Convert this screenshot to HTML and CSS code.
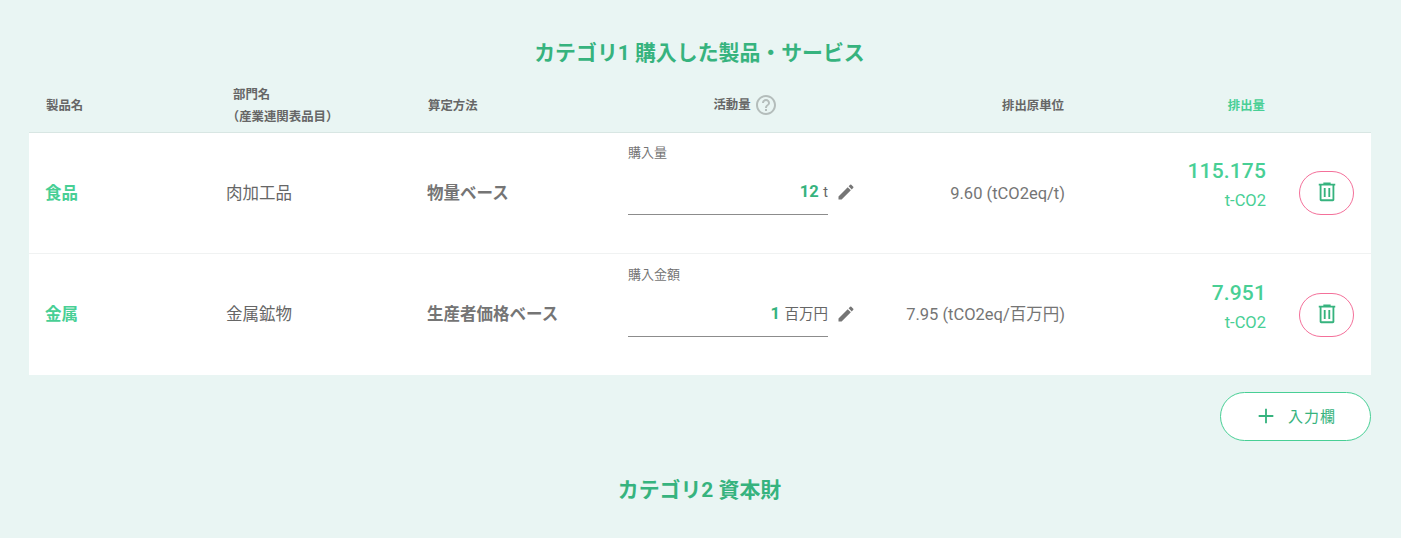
FILE: index.html
```html
<!DOCTYPE html>
<html lang="ja">
  <head>
    <meta charset="utf-8">
    <title>排出量</title>
    <link rel="stylesheet" href="styles.css">
  </head>
  <body>
    <svg class="sprite">
      <symbol id="trash" viewBox="0 0 24 24">
        <path d="M20 3h-4V1.5H8V3H3v2h1v15.5c0 1 .8 1.5 1.7 1.5h12.6c1 0 1.7-.6 1.7-1.5V5h1V3zM18 20H6V5h12v15zM8.5 7.5h2v10h-2zM13.5 7.5h2v10h-2z"/>
      </symbol>
      <symbol id="pencil" viewBox="0 0 24 24">
        <path d="M3 17.25V21h3.75L17.81 9.94l-3.75-3.75L3 17.25zM20.71 7.04a1 1 0 0 0 0-1.41l-2.34-2.34a1 1 0 0 0-1.41 0l-1.83 1.83 3.75 3.75 1.83-1.83z"/>
      </symbol>
    </svg>
    <div id="main">
      <h2>カテゴリ1 購入した製品・サービス</h2>
      <table class="items">
        <colgroup>
          <col class="col-name">
          <col class="col-sector">
          <col class="col-method">
          <col class="col-activity">
          <col class="col-unit">
          <col class="col-emission">
          <col class="col-action">
        </colgroup>
        <thead>
          <tr>
            <th>製品名</th>
            <th class="sector-head">部門名<br><span class="paren">（産業連関表品目）</span></th>
            <th>算定方法</th>
            <th>
              <div class="activity-head">
                活動量
                <svg class="help" viewBox="0 0 24 24"><path d="M11 18h2v-2h-2v2zm1-16C6.48 2 2 6.48 2 12s4.48 10 10 10 10-4.48 10-10S17.52 2 12 2zm0 18c-4.41 0-8-3.59-8-8s3.59-8 8-8 8 3.59 8 8-3.59 8-8 8zm0-14c-2.21 0-4 1.79-4 4h2c0-1.1.9-2 2-2s2 .9 2 2c0 2-3 1.75-3 5h2c0-2.25 3-2.5 3-5 0-2.21-1.79-4-4-4z"/></svg>
              </div>
            </th>
            <th class="right">排出原単位</th>
            <th class="right accent">排出量</th>
            <th></th>
          </tr>
        </thead>
        <tbody>
          <tr>
            <td class="name">食品</td>
            <td class="sector">肉加工品</td>
            <td class="method">物量ベース</td>
            <td class="activity">
              <div class="label">購入量</div>
              <div class="field">
                <div class="value"><b>12</b> t</div>
                <svg class="pencil"><use href="#pencil"/></svg>
              </div>
            </td>
            <td class="right">9.60 (tCO2eq/t)</td>
            <td class="emission">
              <div class="amount">115.175</div>
              <div class="amount-unit">t-CO2</div>
            </td>
            <td><button class="delete"><svg><use href="#trash"/></svg></button></td>
          </tr>
          <tr>
            <td class="name">金属</td>
            <td class="sector">金属鉱物</td>
            <td class="method">生産者価格ベース</td>
            <td class="activity">
              <div class="label">購入金額</div>
              <div class="field">
                <div class="value"><b>1</b> 百万円</div>
                <svg class="pencil"><use href="#pencil"/></svg>
              </div>
            </td>
            <td class="right">7.95 (tCO2eq/百万円)</td>
            <td class="emission">
              <div class="amount">7.951</div>
              <div class="amount-unit">t-CO2</div>
            </td>
            <td><button class="delete"><svg><use href="#trash"/></svg></button></td>
          </tr>
        </tbody>
      </table>
      <div class="actions">
        <button class="add">
          <svg viewBox="0 0 24 24"><path d="M20 13h-7v7h-2v-7H4v-2h7V4h2v7h7z"/></svg>
          入力欄
        </button>
      </div>
      <h2>カテゴリ2 資本財</h2>
    </div>
  </body>
</html>
```

FILE: styles.css
```css
body {
  margin: 0;
  background: #e9f5f3;
  color: #757575;
  font-family: Roboto, "Noto Sans CJK JP", sans-serif;
  font-size: 16px;
}

.sprite {
  display: none;
}

#main {
  padding: 38px 31px 0 29px;
}

h2 {
  margin: 0;
  color: #36b37e;
  font-size: 20.9px;
  font-weight: 700;
  line-height: 30px;
  text-align: center;
}

.items {
  width: 1342px;
  margin-top: 11px;
  table-layout: fixed;
  border-collapse: separate;
  border-spacing: 0;
}

.col-name { width: 181px; }
.col-sector { width: 201px; }
.col-method { width: 201px; }
.col-activity { width: 266px; }
.col-unit { width: 203px; }
.col-emission { width: 202px; }
.col-action { width: 88px; }

th {
  box-sizing: border-box;
  height: 54px;
  padding: 0 17px;
  border-bottom: 1px solid #d8e6e3;
  color: #666;
  font-size: 12.4px;
  font-weight: 700;
  line-height: 22px;
  text-align: left;
}

th.sector-head {
  padding-left: 23px;
}

.paren {
  font-feature-settings: "halt";
}

.activity-head {
  display: flex;
  align-items: center;
  justify-content: center;
  gap: 3px;
  padding: 0 0 2px 1px;
}

.help {
  width: 24px;
  height: 24px;
  fill: #b4bdbb;
}

td {
  box-sizing: border-box;
  height: 121px;
  padding: 0 16px 2px;
  background: #fff;
}

tbody tr:first-child td {
  border-bottom: 1px solid #f0f2f2;
}

tbody tr:last-child td {
  padding-bottom: 3px;
}

th.right,
td.right {
  text-align: right;
}

td.right {
  font-size: 16.5px;
}

tbody tr:first-child td.right {
  padding-bottom: 0;
}

th.accent {
  color: #48cf95;
}

.name {
  color: #48cf95;
  font-size: 16.5px;
  font-weight: 700;
}

.sector {
  color: #666;
  font-size: 16.5px;
}

.method {
  font-size: 16.5px;
  font-weight: 700;
}

.activity {
  vertical-align: top;
}

.label {
  padding-top: 10px;
  font-size: 13px;
  line-height: 20px;
}

tbody tr:last-child .label {
  padding-top: 11px;
}

.field {
  display: flex;
  gap: 8px;
}

.value {
  box-sizing: border-box;
  width: 200px;
  height: 52px;
  padding-top: 18px;
  border-bottom: 1px solid #8c8c8c;
  color: #666;
  font-size: 14.5px;
  line-height: 22px;
  text-align: right;
  word-spacing: 1px;
}

.value b {
  color: #36b37e;
  font-size: 16.5px;
}

.pencil {
  width: 20px;
  height: 20px;
  margin-top: 18.5px;
  fill: #757575;
}

tbody tr td.emission {
  padding: 26px 17px 0 16px;
  color: #48cf95;
  text-align: right;
  vertical-align: top;
}

tbody tr:last-child td.emission {
  padding: 27px 17px 0 16px;
}

th.accent {
  padding-right: 18px;
}

.amount {
  padding-bottom: 1px;
  font-size: 21px;
  font-weight: 500;
  letter-spacing: .15px;
  line-height: 24px;
}

.amount-unit {
  font-size: 16.5px;
  line-height: 34px;
}

button {
  display: flex;
  align-items: center;
  justify-content: center;
  box-sizing: border-box;
  padding: 0;
  background: #fff;
  color: #36b37e;
  font: inherit;
}

button svg {
  fill: #36b37e;
}

.delete {
  width: 55px;
  height: 44px;
  margin-top: 2px;
  padding-bottom: 2px;
  border: 1px solid #f4709a;
  border-radius: 22px;
}

tbody tr:last-child .delete {
  margin-top: 3px;
}

.delete svg {
  width: 22px;
  height: 22px;
}

.actions {
  display: flex;
  justify-content: flex-end;
  width: 1342px;
  padding: 17px 0 34px;
}

.add {
  gap: 11px;
  width: 151px;
  height: 49px;
  padding-bottom: 2px;
  border: 1px solid #48cf95;
  border-radius: 25px;
  font-size: 15px;
  letter-spacing: 1px;
}

.add svg {
  width: 22px;
  height: 22px;
}
```
